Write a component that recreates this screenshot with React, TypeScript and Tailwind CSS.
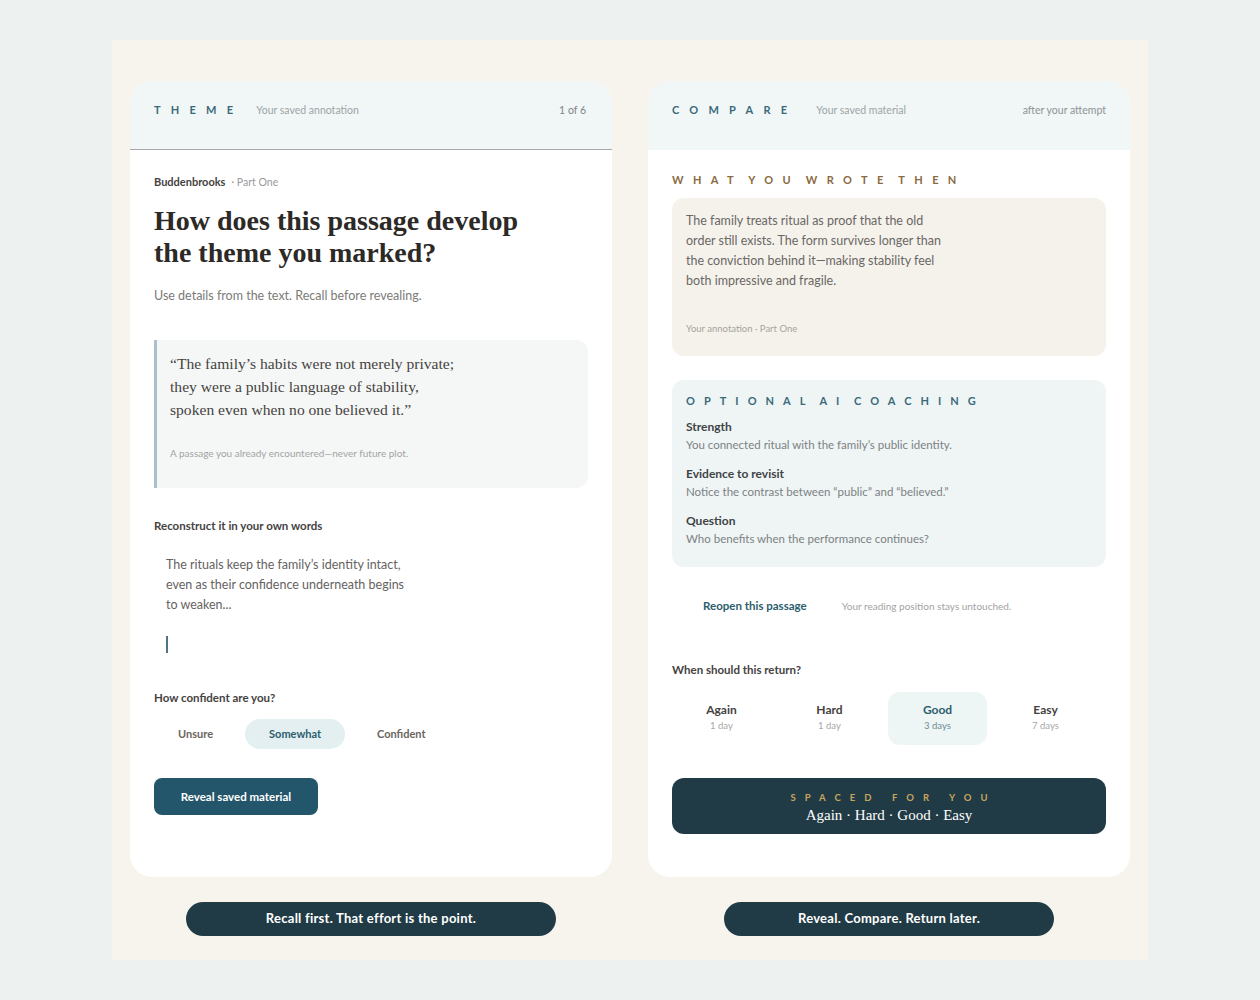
import { useState } from "react";

const sans = "font-['Lato','Noto_Sans',sans-serif]";
const serif = "font-['Liberation_Serif','DejaVu_Serif',serif]";

function ConfidencePill({ label, active, onClick }: { label: string; active: boolean; onClick: () => void }) {
  return (
    <button
      type="button"
      onClick={onClick}
      className={`h-[30px] px-6 rounded-full text-[11px] font-bold ${
        active ? "bg-[#e3eff1] text-[#2c5d6d]" : "text-[#6b6460]"
      }`}
    >
      {label}
    </button>
  );
}

function ReturnOption({ label, days, active }: { label: string; days: string; active?: boolean }) {
  return (
    <div
      className={`h-[53px] rounded-xl flex flex-col items-center pt-[11px] ${
        active ? "bg-[#eef5f5]" : ""
      }`}
    >
      <span className={`text-[12px] leading-[14px] font-bold ${active ? "text-[#2c5d6d]" : "text-[#45423f]"}`}>
        {label}
      </span>
      <span className={`mt-[3px] text-[9.5px] leading-[12px] ${active ? "text-[#6f8c94]" : "text-[#a7a7a7]"}`}>
        {days}
      </span>
    </div>
  );
}

export default function App() {
  const [confidence, setConfidence] = useState("Somewhat");

  return (
    <div className={`min-h-screen bg-[#edf1f0] px-[112px] pt-[40px] ${sans}`}>
      <div className="h-[920px] bg-[#f7f4ee] px-[18px] pt-[41px] grid grid-cols-2 gap-x-[36px] items-start">
        {/* Left: recall */}
        <div className="flex flex-col items-center">
          <div className="w-full h-[796px] rounded-[22px] bg-white overflow-hidden">
            <div className="h-[69px] bg-[#f1f6f6] border-b border-[#a8a8a8] px-6 pt-[22px] flex items-start">
              <span className="text-[11px] leading-[14px] font-bold tracking-[0.93em] text-[#3a6a7a]">THEME</span>
              <span className="ml-[13px] text-[10.5px] leading-[14px] text-[#9ba5a7]">Your saved annotation</span>
              <span className="ml-auto mr-[2px] text-[10.5px] leading-[14px] text-[#7d8587]">1 of 6</span>
            </div>

            <div className="px-6 pt-[25px]">
              <p className="text-[11px] leading-[14px]">
                <span className="font-bold text-[#45423f]">Buddenbrooks</span>
                <span className="ml-[6px] text-[10.5px] text-[#9a9a9a]">· Part One</span>
              </p>

              <h1 className={`mt-[16px] text-[28px] leading-[32px] font-bold text-[#2c2926] ${serif}`}>
                How does this passage develop
                <br />
                the theme you marked?
              </h1>

              <p className="mt-[18px] text-[12.5px] leading-[18px] text-[#7c7a77]">
                Use details from the text. Recall before revealing.
              </p>

              <div className="mt-[35px] h-[148px] rounded-r-xl bg-[#f5f7f6] border-l-[3px] border-[#a9c1c9] pl-[13px] pt-[12px]">
                <p className={`text-[15.6px] leading-[23px] text-[#46433f] ${serif}`}>
                  “The family’s habits were not merely private;
                  <br />
                  they were a public language of stability,
                  <br />
                  spoken even when no one believed it.”
                </p>
                <p className="mt-[25px] text-[10px] leading-[14px] text-[#a3a3a3]">
                  A passage you already encountered—never future plot.
                </p>
              </div>

              <p className="mt-[31px] text-[11.5px] leading-[14px] font-bold text-[#45423f]">
                Reconstruct it in your own words
              </p>

              <div className="mt-[22px] pl-[12px]">
                <p className="text-[12.5px] leading-[20px] text-[#65625f]">
                  The rituals keep the family’s identity intact,
                  <br />
                  even as their confidence underneath begins
                  <br />
                  to weaken...
                </p>
                <div className="mt-[21px] w-[2px] h-[17px] bg-[#4f7585]" />
              </div>

              <p className="mt-[38px] text-[11.5px] leading-[14px] font-bold text-[#45423f]">How confident are you?</p>

              <div className="mt-[14px] flex gap-2">
                {["Unsure", "Somewhat", "Confident"].map((c) => (
                  <ConfidencePill key={c} label={c} active={confidence === c} onClick={() => setConfidence(c)} />
                ))}
              </div>

              <button
                type="button"
                className="mt-[29px] w-[164px] h-[37px] rounded-lg bg-[#23566a] text-white text-[11.5px] font-bold"
              >
                Reveal saved material
              </button>
            </div>
          </div>

          <div className="mt-[25px] w-[370px] h-[34px] rounded-full bg-[#213b46] flex items-center justify-center text-white text-[13px] font-bold tracking-[0.02em]">
            Recall first. That effort is the point.
          </div>
        </div>

        {/* Right: compare */}
        <div className="flex flex-col items-center">
          <div className="w-full h-[796px] rounded-[22px] bg-white overflow-hidden">
            <div className="h-[69px] bg-[#f1f6f6] px-6 pt-[22px] flex items-start">
              <span className="text-[11px] leading-[14px] font-bold tracking-[0.93em] text-[#3a6a7a]">COMPARE</span>
              <span className="ml-[19px] text-[10.5px] leading-[14px] text-[#9ba5a7]">Your saved material</span>
              <span className="ml-auto text-[10.5px] leading-[14px] text-[#8c9496]">after your attempt</span>
            </div>

            <div className="px-6 pt-[23px]">
              <p className="text-[11px] leading-[14px] font-bold tracking-[0.85em] [word-spacing:-6px] text-[#8a6a3f]">
                WHAT YOU WROTE THEN
              </p>

              <div className="mt-[11px] h-[158px] rounded-xl bg-[#f5f2ec] px-[14px] pt-[13px]">
                <p className="w-[260px] text-[12.5px] leading-[20px] text-[#6a6764]">
                  The family treats ritual as proof that the old order still exists. The form survives longer than
                  the conviction behind it—making stability feel both impressive and fragile.
                </p>
                <p className="mt-[32px] text-[9.5px] leading-[12px] text-[#a7a39c]">Your annotation · Part One</p>
              </div>

              <div className="mt-[24px] h-[187px] rounded-xl bg-[#eff5f5] px-[14px] pt-[14px]">
                <p className="text-[11px] leading-[14px] font-bold tracking-[0.82em] [word-spacing:-6px] text-[#3a6a7a]">
                  OPTIONAL AI COACHING
                </p>
                {[
                  ["Strength", "You connected ritual with the family’s public identity."],
                  ["Evidence to revisit", "Notice the contrast between “public” and “believed.”"],
                  ["Question", "Who benefits when the performance continues?"],
                ].map(([title, body], i) => (
                  <div key={title} className={i === 0 ? "mt-[12px]" : "mt-[14px]"}>
                    <p className="text-[12px] leading-[14px] font-bold text-[#3f4447]">{title}</p>
                    <p className="mt-[3px] text-[11.5px] leading-[16px] text-[#7c8183]">{body}</p>
                  </div>
                ))}
              </div>

              <div className="mt-[32px] pl-[31px] flex items-center gap-[35px]">
                <button type="button" className="text-[11.5px] leading-[14px] font-bold text-[#2c5d6d]">
                  Reopen this passage
                </button>
                <span className="text-[10px] leading-[14px] text-[#a3a3a3]">Your reading position stays untouched.</span>
              </div>

              <p className="mt-[50px] text-[11.5px] leading-[14px] font-bold text-[#45423f]">When should this return?</p>

              <div className="mt-[15px] grid grid-cols-[repeat(4,99px)] gap-[9px]">
                <ReturnOption label="Again" days="1 day" />
                <ReturnOption label="Hard" days="1 day" />
                <ReturnOption label="Good" days="3 days" active />
                <ReturnOption label="Easy" days="7 days" />
              </div>

              <div className="mt-[33px] h-[56px] rounded-xl bg-[#213b46] flex flex-col items-center pt-[14px]">
                <p className="text-[9.5px] leading-[12px] font-bold tracking-[0.95em] pl-[0.95em] text-[#c9a45c]">
                  SPACED FOR YOU
                </p>
                <p className={`mt-[1px] text-[15px] leading-[20px] text-white ${serif}`}>
                  Again · Hard · Good · Easy
                </p>
              </div>
            </div>
          </div>

          <div className="mt-[25px] w-[330px] h-[34px] rounded-full bg-[#213b46] flex items-center justify-center text-white text-[13px] font-bold tracking-[0.02em]">
            Reveal. Compare. Return later.
          </div>
        </div>
      </div>
    </div>
  );
}
